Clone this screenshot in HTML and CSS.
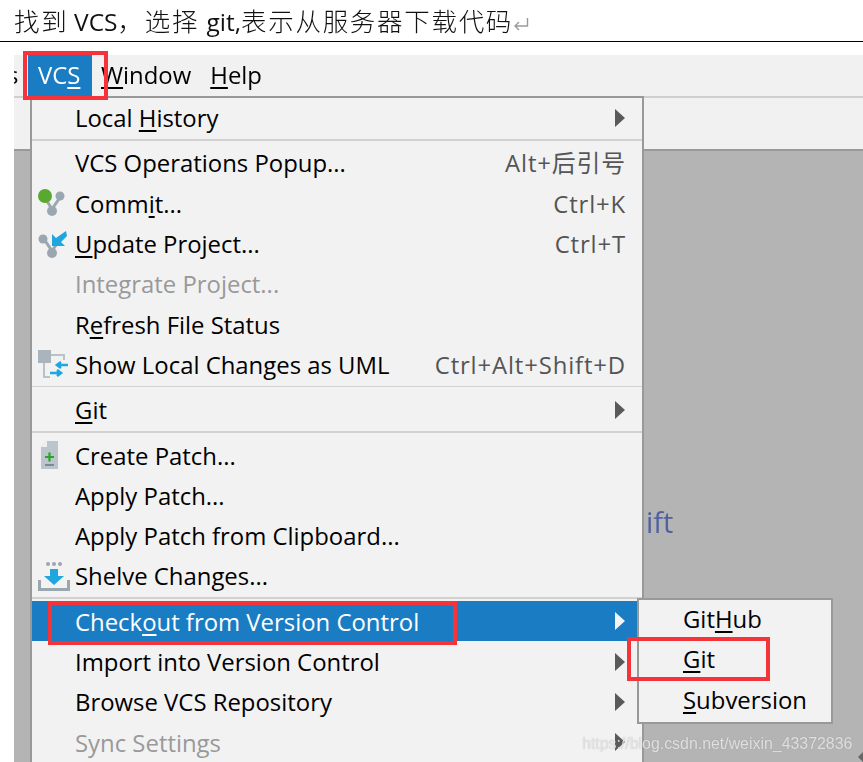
FILE: index.html
```html
<!DOCTYPE html>
<html lang="zh">
<head>
<meta charset="utf-8">
<title>VCS</title>
<link rel="stylesheet" href="styles.css">
</head>
<body>
<header class="doc-line">
  <span class="doc-text">找到<span class="gap"> </span><span class="latin">VCS</span>，选择 <span class="latin">git,</span>表示从服务器下载代码</span><svg class="para-mark" width="18" height="16" viewBox="0 0 18 16"><path d="M15.500 2v8H3M7 6l-4 4 4 4" fill="none" stroke="#999" stroke-width="1.400"/></svg>
</header>
<main class="app">
  <nav class="menubar">
    <span class="cut">s</span>
    <span class="top-item active">VC<u>S</u></span>
    <span class="top-item"><u>W</u>indow</span>
    <span class="top-item"><u>H</u>elp</span>
  </nav>
  <div class="toolbar"></div>
  <div class="workspace"></div>

  <span class="hint">ift</span>

  <div class="menu">
    <div class="row"><span class="slot"></span><span class="label">Local <u>H</u>istory</span><i class="arrow"></i></div>
    <div class="sep"></div>
    <div class="row"><span class="slot"></span><span class="label">VCS Operations Popup...</span><span class="key">Alt+后引号</span></div>
    <div class="row"><span class="slot"><svg width="34" height="32" viewBox="0 0 34 32"><path d="M9 11l7 11 9-13" fill="none" stroke="#9aa7b0" stroke-width="3"/><circle cx="24" cy="9" r="4.500" fill="#9aa7b0"/><circle cx="16" cy="24" r="5" fill="#9aa7b0"/><circle cx="9" cy="9" r="7" fill="#59a82f"/></svg></span><span class="label">Comm<u>i</u>t...</span><span class="key">Ctrl+K</span></div>
    <div class="row"><span class="slot"><svg width="34" height="32" viewBox="0 0 34 32"><path d="M8 11l8 12 6-9" fill="none" stroke="#9aa7b0" stroke-width="3"/><circle cx="7" cy="11" r="4.500" fill="#9aa7b0"/><circle cx="16" cy="25" r="5" fill="#9aa7b0"/><path d="M30 3l1 5-6 6 4 4H16V6l4 4z" fill="#1ea6df"/></svg></span><span class="label"><u>U</u>pdate Project...</span><span class="key">Ctrl+T</span></div>
    <div class="row off"><span class="slot"></span><span class="label">Inte<u>g</u>rate Project...</span></div>
    <div class="row"><span class="slot"></span><span class="label">R<u>e</u>fresh File Status</span></div>
    <div class="row"><span class="slot"><svg width="34" height="32" viewBox="0 0 34 32"><rect x="2" y="2" width="13" height="13" fill="#a9b4bc"/><path d="M15 7h13v5M8 15v14h6" fill="none" stroke="#b9c2c8" stroke-width="2"/><path d="M22 17h10M25 14l-4 3 4 3" fill="none" stroke="#1ea6df" stroke-width="2.600"/><path d="M14 25h10M21 22l4 3-4 3" fill="none" stroke="#1ea6df" stroke-width="2.600"/></svg></span><span class="label">Show Local Changes as UML</span><span class="key">Ctrl+Alt+Shift+D</span></div>
    <div class="sep"></div>
    <div class="row"><span class="slot"></span><span class="label"><u>G</u>it</span><i class="arrow"></i></div>
    <div class="sep"></div>
    <div class="row"><span class="slot"><svg width="34" height="32" viewBox="0 0 34 32"><path d="M5 8l6-6h11v28H5z" fill="#bcc5cb"/><path d="M5 8h6V2z" fill="#eef0f1"/><path d="M9 18h9M13.500 13.500v9" stroke="#2aa52a" stroke-width="2.200"/><path d="M9 26h9" stroke="#7d8a92" stroke-width="2"/></svg></span><span class="label">Create Patch...</span></div>
    <div class="row"><span class="slot"></span><span class="label">Apply Patch...</span></div>
    <div class="row"><span class="slot"></span><span class="label">Apply Patch from Clipboard...</span></div>
    <div class="row"><span class="slot"><svg width="34" height="32" viewBox="0 0 34 32"><circle cx="12" cy="4" r="2" fill="#9aa7b0"/><circle cx="18" cy="4" r="2" fill="#9aa7b0"/><circle cx="24" cy="4" r="2" fill="#9aa7b0"/><path d="M14 9h8v7h6L18 25 8 16h6z" fill="#1ea6df"/><path d="M3.500 20v9.500h29V20" fill="none" stroke="#9aa7b0" stroke-width="3"/></svg></span><span class="label">Shelve Changes...</span></div>
    <div class="sep"></div>
    <div class="row selected"><span class="slot"></span><span class="label">Check<u>o</u>ut from Version Control</span><i class="arrow"></i></div>
    <div class="row"><span class="slot"></span><span class="label">Import into Version Control</span><i class="arrow"></i></div>
    <div class="row"><span class="slot"></span><span class="label">Browse VCS Repository</span><i class="arrow"></i></div>
    <div class="row off"><span class="slot"></span><span class="label">Sync Settings</span><i class="arrow"></i></div>
  </div>

  <div class="submenu">
    <div class="sub-row">Git<u>H</u>ub</div>
    <div class="sub-row"><u>G</u>it</div>
    <div class="sub-row"><u>S</u>ubversion</div>
  </div>
</main>

<div class="mark mark-vcs"></div>
<div class="mark mark-checkout"></div>
<div class="mark mark-git"></div>
<div class="watermark">https://blog.csdn.net/weixin_43372836</div>
<i class="edge-tip"></i>
</body>
</html>
```
FILE: styles.css
```css
* { box-sizing: border-box; }
html, body { margin: 0; height: 100%; }
body {
  position: relative;
  height: 762px;
  overflow: hidden;
  background: #fff;
  font-family: "Open Sans", "Noto Sans CJK SC", sans-serif;
  color: #000;
  filter: blur(0.3px);
}
u { text-decoration-thickness: 2px; text-underline-offset: 3px; }

.doc-line {
  height: 42px;
  padding: 0 0 0 14px;
  border-bottom: 1px solid #000;
  display: flex;
  align-items: center;
  font-family: "Noto Sans CJK SC", sans-serif;
  font-weight: 300;
  font-size: 25.500px;
  letter-spacing: 1.700px;
  line-height: 40px;
  white-space: nowrap;
  color: #111;
}
.gap { letter-spacing: 0; }
.latin { font-family: "Open Sans", sans-serif; font-weight: 400; font-size: 24.500px; letter-spacing: 0; }
.para-mark { margin: 6px 0 0 -1px; }

.app {
  position: absolute;
  left: 14px;
  top: 55px;
  right: 0;
  bottom: 0;
  display: flex;
  flex-direction: column;
  background: #b4b4b4;
}
.menubar {
  flex: none;
  height: 41px;
  display: flex;
  align-items: stretch;
  background: #f1f1f1;
  font-size: 23.900px;
  line-height: 40px;
}
.cut { width: 14px; overflow: hidden; text-indent: -7px; }
.top-item { padding: 0 10px 0 9px; }
.top-item.active { background: #1a7dc4; color: #fff; width: 64px; padding-left: 10px; }
.toolbar {
  flex: none;
  height: 55px;
  background: #f1f1f1;
  border-top: 2px solid #cfcfcf;
  border-bottom: 2px solid #999;
}
.workspace { flex: 1; }

.hint {
  position: absolute;
  left: 632px;
  top: 447px;
  font-size: 29px;
  line-height: 40px;
  color: #5061a0;
}

.menu {
  position: absolute;
  left: 16px;
  top: 40.500px;
  width: 614px;
  height: 680px;
  background: #f2f2f2;
  border: 2px solid #999;
  border-bottom: 0;
  font-size: 23.900px;
}
.row {
  height: 40.300px;
  padding-right: 17px;
  display: flex;
  align-items: center;
  white-space: nowrap;
  line-height: 37px;
}
.slot {
  flex: none;
  width: 43px;
  height: 32px;
  padding-left: 4px;
}
.slot svg { display: block; }
.label { flex: 1; }
.key { color: #555; letter-spacing: 0.850px; margin-right: -1px; }
.off { color: #999; }
.sep {
  height: 5px;
  padding: 1.250px 0;
}
.sep::before {
  content: "";
  display: block;
  height: 1.500px;
  background: #d2d2d2;
}
.arrow {
  flex: none;
  width: 0;
  height: 0;
  border-left: 10px solid #5a5a5a;
  border-top: 9px solid transparent;
  border-bottom: 9px solid transparent;
}
.selected { background: #1a7dc4; color: #fff; }
.selected .arrow { border-left-color: #f4f4f4; }

.submenu {
  position: absolute;
  left: 623px;
  top: 543px;
  width: 196px;
  height: 126px;
  padding: 0 0 0 44px;
  background: #f2f2f2;
  border: 2px solid #999;
  font-size: 23.900px;
}
.sub-row { height: 40.300px; line-height: 38px; }

.mark {
  position: absolute;
  border: 4px solid #f5333a;
}
.mark-vcs { left: 23px; top: 51px; width: 85px; height: 49px; }
.mark-checkout { left: 48px; top: 601px; width: 409px; height: 44px; }
.mark-git { left: 627px; top: 637px; width: 143px; height: 44px; }

.watermark {
  position: absolute;
  left: 582px;
  top: 732px;
  font-family: "Liberation Sans", sans-serif;
  font-size: 15.900px;
  line-height: 24px;
  color: rgba(235, 235, 235, 0.85);
  text-shadow: 0 0 1px rgba(120, 120, 120, 0.5);
  white-space: nowrap;
}
.edge-tip {
  position: absolute;
  right: 0;
  top: 752px;
  width: 0;
  height: 0;
  border-right: 5px solid #666;
  border-top: 5px solid transparent;
  border-bottom: 5px solid transparent;
}
```
